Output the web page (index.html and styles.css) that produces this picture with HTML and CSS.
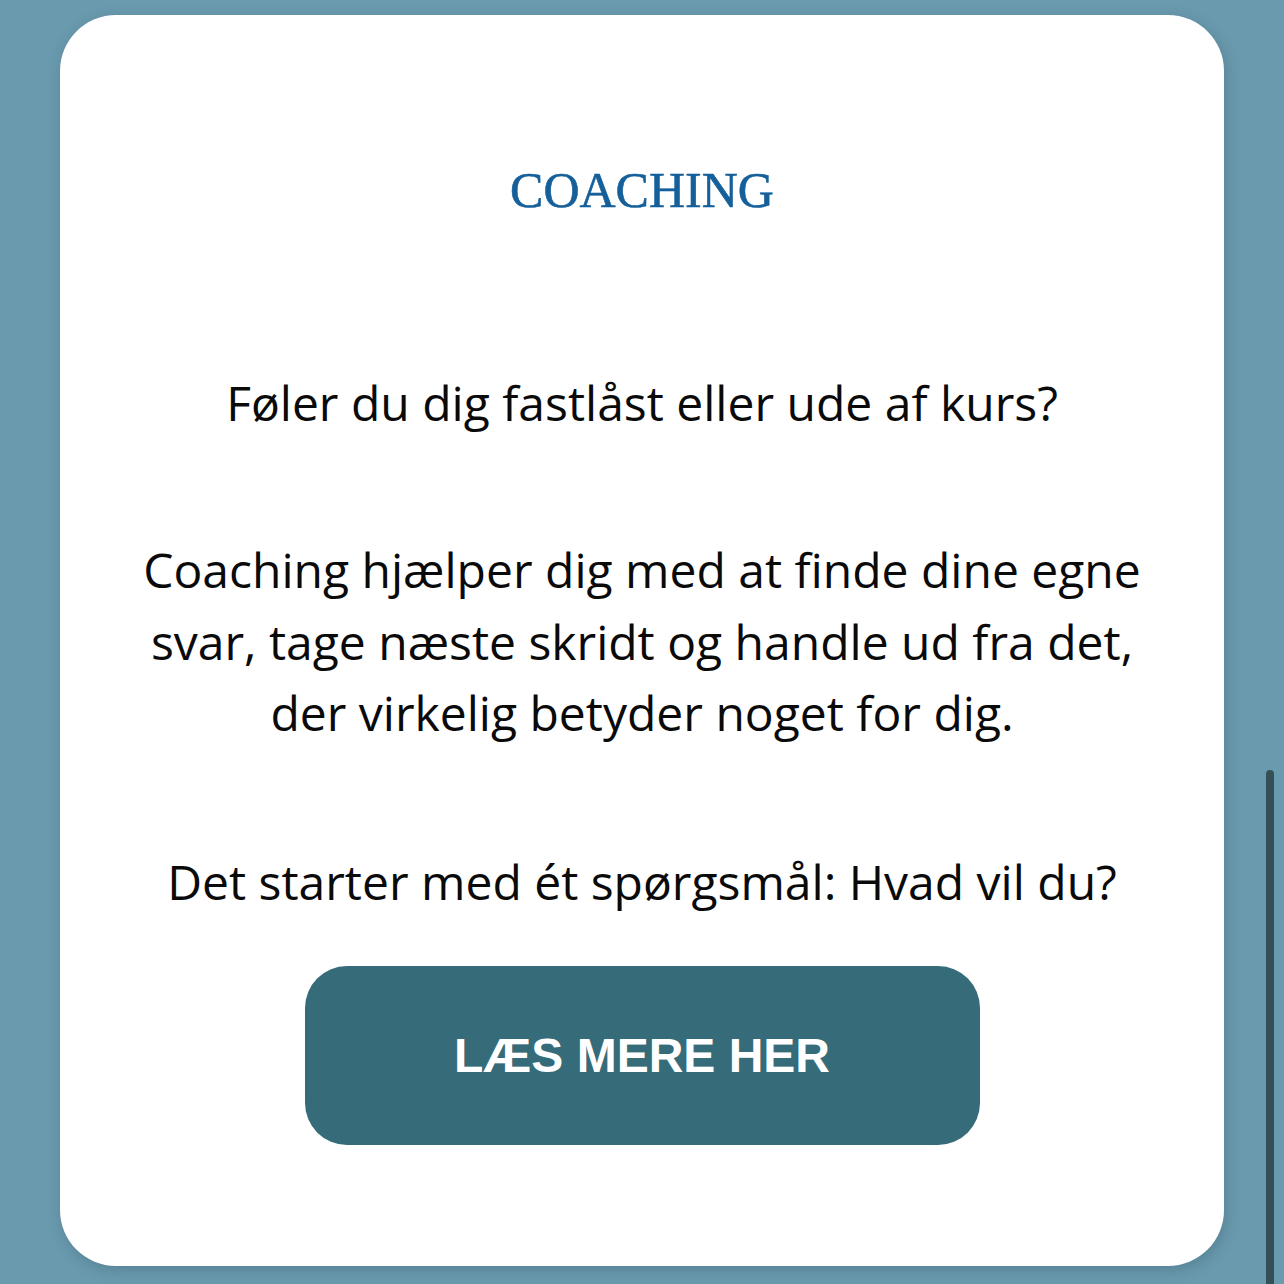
FILE: index.html
```html
<!DOCTYPE html>
<html lang="da">
<head>
<meta charset="utf-8">
<link rel="stylesheet" href="styles.css">
</head>
<body>
<main class="page">
  <section class="card">
    <h2 class="title">COACHING</h2>
    <p class="text lead">Føler du dig fastlåst eller ude af kurs?</p>
    <p class="text body">Coaching hjælper dig med at finde dine egne svar, tage næste skridt og handle ud fra det, der virkelig betyder noget for dig.</p>
    <p class="text closing">Det starter med ét spørgsmål: Hvad vil du?</p>
    <a class="button" href="#">LÆS MERE HER</a>
  </section>
</main>
<div class="scrollbar"></div>
</body>
</html>
```

FILE: styles.css
```css
html, body {
  margin: 0;
  padding: 0;
  height: 100%;
  overflow: hidden;
}
body {
  background: #6a9aae;
  font-family: "Open Sans", "Noto Sans", sans-serif;
}
.page {
  padding: 15px 60px 0 60px;
}
.card {
  background: #ffffff;
  border-radius: 56px;
  height: 1251px;
  box-sizing: border-box;
  padding: 145px 70px 0 70px;
  display: flex;
  flex-direction: column;
  align-items: center;
  box-shadow: 2px 4px 14px rgba(30, 60, 75, 0.25);
}
.title {
  margin: 0;
  font-family: "Liberation Serif", "Times New Roman", serif;
  font-weight: 400;
  font-size: 50px;
  line-height: 60px;
  color: #15609a;
  -webkit-text-stroke: 0.6px #15609a;
}
.text {
  margin: 0;
  font-size: 48px;
  line-height: 71.5px;
  color: #0a0a0a;
  text-align: center;
}
.lead {
  margin-top: 147px;
}
.body {
  margin-top: 95.5px;
}
.closing {
  margin-top: 97.5px;
}
.button {
  margin-top: 48px;
  width: 675px;
  height: 179px;
  border-radius: 42px;
  background: #366b79;
  color: #ffffff;
  text-decoration: none;
  font-family: "Liberation Sans", Arial, sans-serif;
  font-weight: 700;
  font-size: 48px;
  display: flex;
  align-items: center;
  justify-content: center;
}
.scrollbar {
  position: absolute;
  left: 1266px;
  top: 770px;
  width: 8px;
  height: 540px;
  border-radius: 4px;
  background: #354f56;
}
```
